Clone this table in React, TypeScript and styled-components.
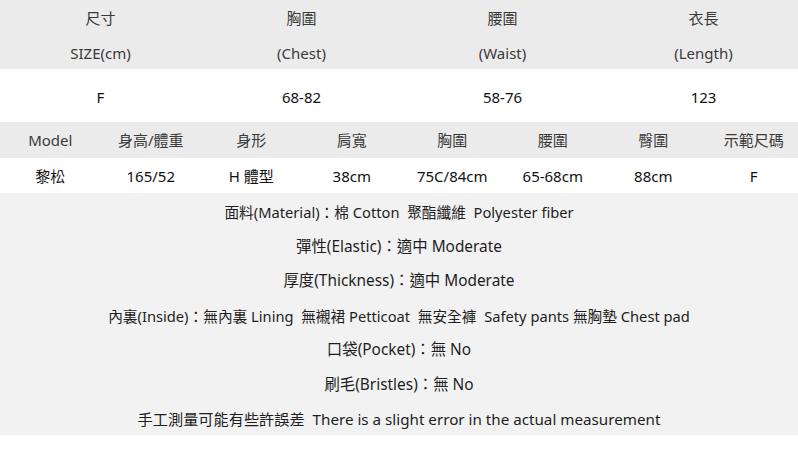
import React from 'react';
import styled, { createGlobalStyle } from 'styled-components';

const GlobalStyle = createGlobalStyle`
  html, body {
    margin: 0;
    padding: 0;
    background: #ffffff;
    overflow: hidden;
  }
  body {
    font-family: "Noto Sans", "Noto Sans CJK TC", sans-serif;
    color: #1e1e1e;
  }
`;

const sizeHead = [
  ['尺寸', 'SIZE(cm)'],
  ['胸圍', '(Chest)'],
  ['腰圍', '(Waist)'],
  ['衣長', '(Length)'],
];
const sizeValues = ['F', '68-82', '58-76', '123'];

const modelHead = ['Model', '身高/體重', '身形', '肩寬', '胸圍', '腰圍', '臀圍', '示範尺碼'];
const modelValues = ['黎松', '165/52', 'H 體型', '38cm', '75C/84cm', '65-68cm', '88cm', 'F'];

const notes: { text: string; size: number }[] = [
  { text: '面料(Material)：棉 Cotton  聚酯纖維  Polyester fiber', size: 14.7 },
  { text: '彈性(Elastic)：適中 Moderate', size: 15.4 },
  { text: '厚度(Thickness)：適中 Moderate', size: 15.4 },
  { text: '內裏(Inside)：無內裏 Lining  無襯裙 Petticoat  無安全褲  Safety pants 無胸墊 Chest pad', size: 14.7 },
  { text: '口袋(Pocket)：無 No', size: 15.4 },
  { text: '刷毛(Bristles)：無 No', size: 15.4 },
  { text: '手工測量可能有些許誤差  There is a slight error in the actual measurement', size: 15.2 },
];

const App = () => {
  return (
    <Page>
      <GlobalStyle />
      <SizeTable>
        {sizeHead.map(([zh, en]) => (
          <HeadCell key={zh}>
            <HeadLine>{zh}</HeadLine>
            <HeadLine>{en}</HeadLine>
          </HeadCell>
        ))}
        {sizeValues.map((v) => (
          <SizeValue key={v}>{v}</SizeValue>
        ))}
      </SizeTable>
      <ModelTable>
        {modelHead.map((h) => (
          <ModelHead key={h}>{h}</ModelHead>
        ))}
        {modelValues.map((v) => (
          <ModelValue key={v}>{v}</ModelValue>
        ))}
      </ModelTable>
      <Notes>
        {notes.map((n) => (
          <NoteLine key={n.text} $size={n.size}>
            {n.text}
          </NoteLine>
        ))}
      </Notes>
    </Page>
  );
};

const Page = styled.div`
  width: 804px;
`;

const SizeTable = styled.div`
  display: grid;
  grid-template-columns: repeat(4, 201px);
`;

const HeadCell = styled.div`
  display: flex;
  flex-direction: column;
  align-items: center;
  background: #ebebeb;
  height: 69px;
`;

const HeadLine = styled.div`
  height: 34.5px;
  line-height: 36px;
  font-size: 15px;
  color: #3a3a3a;
`;

const SizeValue = styled.div`
  height: 53px;
  line-height: 56px;
  text-align: center;
  font-size: 15px;
  color: #111;
`;

const ModelTable = styled.div`
  display: grid;
  grid-template-columns: repeat(8, 100.5px);
  grid-template-rows: 36px 35px;
`;

const ModelHead = styled.div`
  background: #ebebeb;
  text-align: center;
  line-height: 37px;
  font-size: 15px;
  color: #3a3a3a;
`;

const ModelValue = styled.div`
  text-align: center;
  line-height: 37px;
  font-size: 15px;
  color: #111;
`;

const Notes = styled.div`
  background: #f2f2f2;
  padding-top: 2px;
  width: 798px;
  height: 240px;
`;

const NoteLine = styled.div<{ $size: number }>`
  height: 34.5px;
  line-height: 34.5px;
  text-align: center;
  font-size: ${(p) => p.$size}px;
  color: #1e1e1e;
  white-space: pre;
`;

export default App;
